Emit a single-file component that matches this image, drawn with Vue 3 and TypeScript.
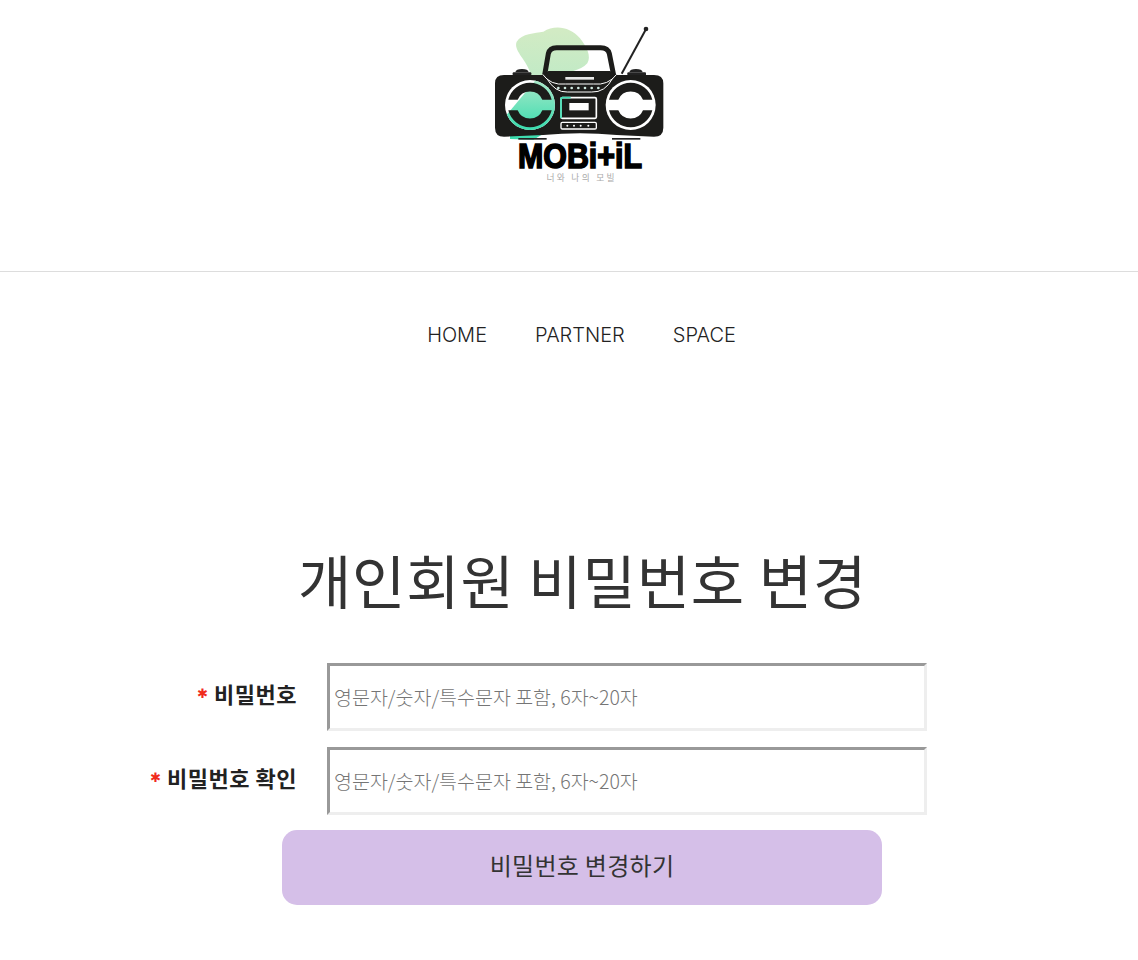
<script setup lang="ts">
const navItems: string[] = ['HOME', 'PARTNER', 'SPACE']
const fields = [
  { label: '비밀번호', id: 'pw' },
  { label: '비밀번호 확인', id: 'pw2' },
]
const dots: number[] = [235, 255, 275, 295, 315, 335, 355]
const smallDots: number[] = [262, 282, 302, 325]
const arcs =
  'M-65 -16A67 67 0 0 1 65 -16L37 -16A40 40 0 0 0 -37 -16Z' +
  'M-65 16A67 67 0 0 0 65 16L37 16A40 40 0 0 1 -37 16Z'
</script>

<template>
  <div class="page">
    <header class="top">
      <svg class="logo" viewBox="0 0 600 540" width="200" height="180" role="img" aria-label="MOBi+iL">
        <defs>
          <linearGradient id="blob" x1="0" y1="0" x2="0" y2="1">
            <stop offset="0" stop-color="#d3ebc4" />
            <stop offset="0.5" stop-color="#bfeac6" />
            <stop offset="1" stop-color="#38dcae" />
          </linearGradient>
          <linearGradient id="disc" x1="0" y1="0" x2="0" y2="1">
            <stop offset="0" stop-color="#a9e8c8" />
            <stop offset="1" stop-color="#38dcae" />
          </linearGradient>
          <clipPath id="diag">
            <path d="M68 314L168 194H240V352H68Z" />
          </clipPath>
        </defs>
        <path d="M110 80C125 55 165 55 190 50C225 28 270 35 300 70C320 95 335 125 322 145C300 170 265 165 240 190L250 260L235 330L160 374L90 372L90 290L150 170C135 130 100 105 110 80Z" fill="url(#blob)" />
        <line x1="425" y1="176" x2="497" y2="44" stroke="#222" stroke-width="6" />
        <circle cx="498" cy="42" r="7" fill="#222" />
        <path d="M106 172Q108 162 126 162Q144 162 146 172Z" fill="#222" />
        <rect x="98" y="172" width="56" height="10" rx="3" fill="#222" />
        <path d="M448 172Q450 162 468 162Q486 162 488 172Z" fill="#222" />
        <rect x="442" y="172" width="56" height="10" rx="3" fill="#222" />
        <path d="M193 186L205 116Q209 98 230 98H362Q384 98 388 116L402 186" fill="none" stroke="#1c1c1a" stroke-width="15" />
        <path d="M45 205Q45 180 72 180H190L205 168H390L412 180H522Q550 180 550 205V338Q550 365 522 365L410 360Q300 350 190 360L72 365Q45 365 45 338Z" fill="#1c1c1a" />
        <rect x="256" y="186" width="86" height="8" fill="#e8e8e8" />
        <path d="M188 178Q212 212 256 207H340Q385 212 410 178" fill="none" stroke="#fff" stroke-width="3" />
        <path d="M200 190Q225 233 262 231H335Q375 233 398 190" fill="none" stroke="#fff" stroke-width="3" />
        <rect x="115" y="369" width="85" height="5" fill="#222" />
        <rect x="396" y="369" width="85" height="5" fill="#222" />

        <circle cx="150" cy="270" r="75" fill="#fff" />
        <circle cx="150" cy="270" r="75" fill="url(#disc)" clip-path="url(#diag)" />
        <path :d="arcs" transform="translate(150 270)" fill="#1c1c1a" />
        <circle cx="452" cy="270" r="75" fill="#fff" />
        <path :d="arcs" transform="translate(452 270)" fill="#1c1c1a" />

        <circle v-for="d in dots" :key="d" :cx="d" cy="219" r="4" fill="#cfe8e0" />
        <rect x="243" y="248" width="106" height="62" rx="4" fill="#1c1c1a" stroke="#fff" stroke-width="5" />
        <path d="M243 310V252Q243 248 247 248H272" fill="none" stroke="#3fddb2" stroke-width="5" />
        <rect x="268" y="264" width="58" height="22" fill="#fff" />
        <rect x="243" y="322" width="106" height="20" rx="4" fill="#1c1c1a" stroke="#fff" stroke-width="4" />
        <circle v-for="d in smallDots" :key="d" :cx="d" cy="332" r="3" fill="#fff" />
        <text x="300" y="460" text-anchor="middle" class="brand" textLength="372" lengthAdjust="spacingAndGlyphs">MOBi+iL</text>
        <text x="305" y="499" text-anchor="middle" class="sub">너와 나의 모빌</text>
      </svg>
    </header>

    <nav class="nav">
      <a v-for="item in navItems" :key="item" class="nav-link">{{ item }}</a>
    </nav>

    <main class="content">
      <h1 class="title">개인회원 비밀번호 변경</h1>
      <form class="form" @submit.prevent>
        <div v-for="f in fields" :key="f.id" class="row">
          <label class="label" :for="f.id"><span class="star">✱</span>{{ f.label }}</label>
          <input :id="f.id" class="input" type="password" placeholder="영문자/숫자/특수문자 포함, 6자~20자" />
        </div>
        <button class="submit" type="submit">비밀번호 변경하기</button>
      </form>
    </main>
  </div>
</template>

<style>
html, body { background: #fff; }
</style>

<style scoped>
.page {
  width: 1138px;
  font-family: "Noto Sans CJK KR", "Noto Sans", sans-serif;
  color: #333;
}
.top {
  height: 271px;
  border-bottom: 1px solid #ddd;
  display: flex;
  justify-content: center;
  align-items: flex-start;
  padding-left: 22px;
  width: 1116px;
}
.logo { margin-top: 15px; display: block; }
.brand {
  font-family: "Liberation Sans", sans-serif;
  font-weight: 700;
  font-size: 104px;
  fill: #000;
  stroke: #000;
  stroke-width: 5px;
}
.sub {
  font-family: "Noto Sans CJK KR", sans-serif;
  font-size: 26px;
  letter-spacing: 7px;
  fill: #aaa;
}
.nav {
  display: flex;
  justify-content: center;
  gap: 48px;
  padding: 48px 0 0 25px;
  height: 60px;
}
.nav-link {
  font-family: Inter, "Open Sans", sans-serif;
  font-size: 20px;
  font-weight: 300;
  line-height: 30px;
  color: #222;
}
.content {
  display: flex;
  flex-direction: column;
  align-items: center;
  padding: 159px 0 30px 27px;
}
.title {
  margin: 0;
  font-size: 58px;
  font-weight: 400;
  line-height: 80px;
  letter-spacing: 0.8px;
  color: #333;
}
.form {
  margin-top: 44px;
  display: flex;
  flex-direction: column;
  gap: 16px;
  width: 800px;
  align-self: flex-start;
  margin-left: 103px;
}
.row {
  display: flex;
  align-items: center;
  gap: 30px;
}
.label {
  width: 167px;
  padding-bottom: 8px;
  text-align: right;
  font-size: 22px;
  font-weight: 700;
  letter-spacing: 0.5px;
  color: #222;
  white-space: nowrap;
}
.star {
  color: #f02b1d;
  font-family: "DejaVu Sans", sans-serif;
  font-size: 13px;
  margin-right: 6px;
  vertical-align: 5px;
  letter-spacing: 0;
}
.input {
  width: 600px;
  height: 68px;
  box-sizing: border-box;
  border-width: 3px;
  border-style: solid;
  border-color: #999 #eee #eee #999;
  padding: 0 4px 2px;
  font-family: "Noto Sans CJK KR", sans-serif;
  font-size: 19.5px;
  font-weight: 300;
  background: #fff;
  outline: none;
}
.input::placeholder { color: #757575; opacity: 1; }
.submit {
  width: 600px;
  height: 75px;
  margin: -1px 0 0 152px;
  padding: 0 0 6px;
  border: none;
  border-radius: 15px;
  background: #d5bfe8;
  color: #333;
  font-family: "Noto Sans CJK KR", sans-serif;
  font-size: 24px;
  font-weight: 400;
  letter-spacing: 0.3px;
}
</style>
